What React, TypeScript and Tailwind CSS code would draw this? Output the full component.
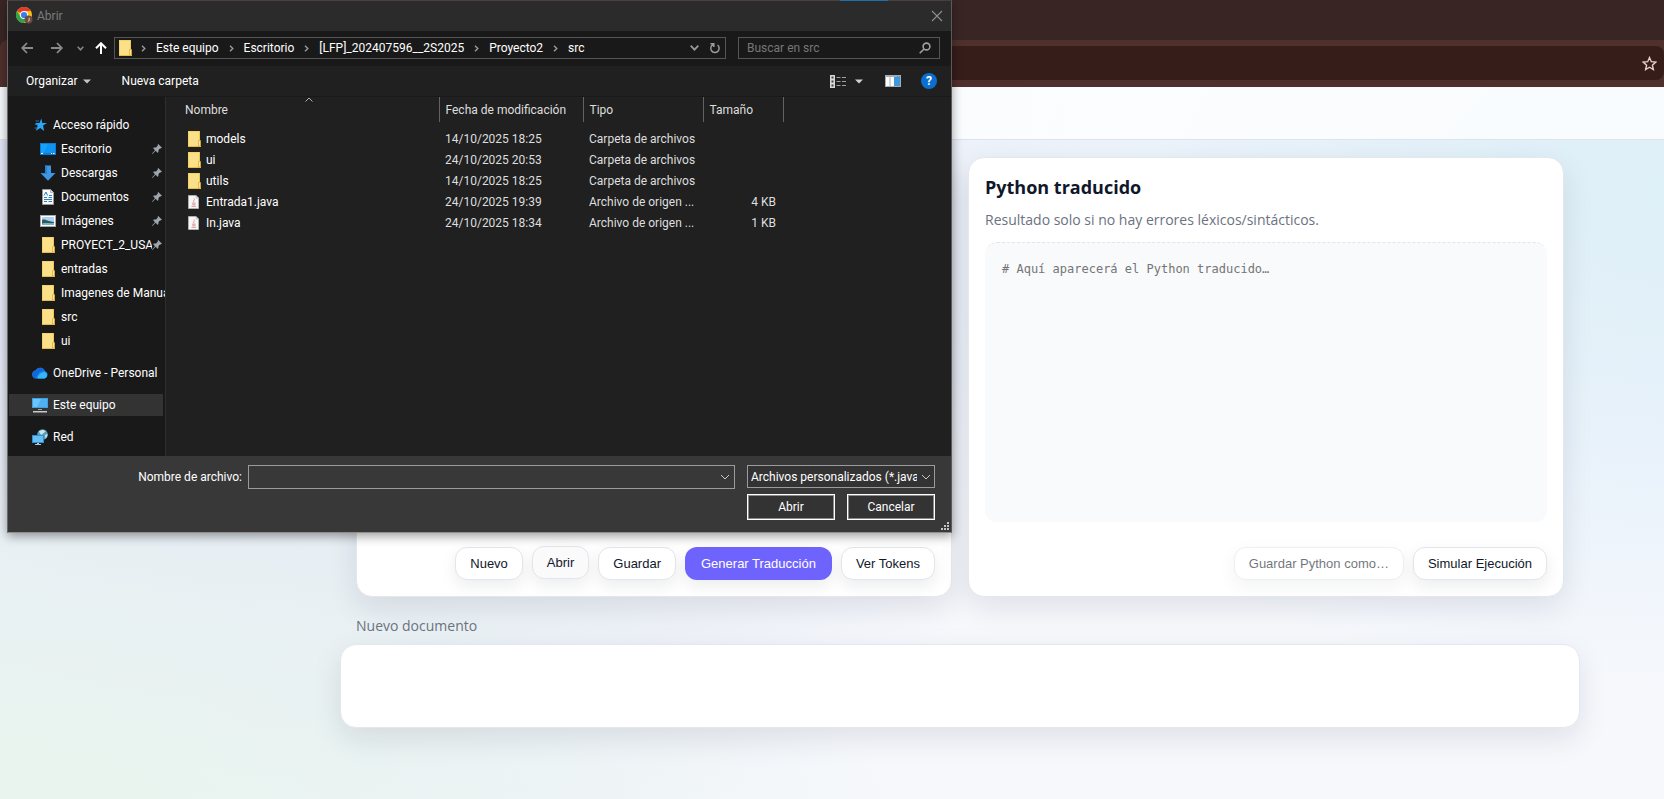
import type { ReactNode } from "react";

type FileRow = { name: string; date: string; type: string; size: string; kind: "folder" | "java" };

const files: FileRow[] = [
  { name: "models", date: "14/10/2025 18:25", type: "Carpeta de archivos", size: "", kind: "folder" },
  { name: "ui", date: "24/10/2025 20:53", type: "Carpeta de archivos", size: "", kind: "folder" },
  { name: "utils", date: "14/10/2025 18:25", type: "Carpeta de archivos", size: "", kind: "folder" },
  { name: "Entrada1.java", date: "24/10/2025 19:39", type: "Archivo de origen ...", size: "4 KB", kind: "java" },
  { name: "In.java", date: "24/10/2025 18:34", type: "Archivo de origen ...", size: "1 KB", kind: "java" },
];

const crumbs = ["Este equipo", "Escritorio", "[LFP]_202407596__2S2025", "Proyecto2", "src"];

function FolderIcon() {
  return (
    <svg width="16" height="16" viewBox="0 0 16 16" className="shrink-0" aria-hidden="true">
      <path d="M2 0h12v16H2z" fill="#fbe08a" />
      <path d="M2 0h1v16H2zM2 0h12v1H2z" fill="#f6d365" />
      <path d="M13 0h1v9h-1z" fill="#eec854" />
      <path d="M2 15h13v1H2z" fill="#e9bd45" />
      <path d="M12.500 9.500h2V15h-2z" fill="#fde9a4" stroke="#e0af33" strokeWidth="0.800" />
    </svg>
  );
}

function JavaFileIcon() {
  return (
    <svg width="16" height="16" viewBox="0 0 16 16" className="shrink-0" aria-hidden="true">
      <path d="M2.500 1.500h7.500l2.500 2.500v10.500h-10z" fill="#f7f7f7" stroke="#b9b9b9" strokeWidth="0.800" />
      <path d="M10 1.500v2.500h2.500" fill="#dcdcdc" stroke="#b9b9b9" strokeWidth="0.600" />
      <path d="M8 4.500c1.500 1.200-1.600 2 0 3.800M6 9.200h3.600M6.400 10.700h3M5.500 12.300h4.600" fill="none" stroke="#d98a8f" strokeWidth="0.900" />
    </svg>
  );
}

function QuickIcon() {
  return (
    <svg width="16" height="16" viewBox="0 0 16 16" className="shrink-0" aria-hidden="true">
      <path d="M9.300 1.500l1 4.400 4.700.2-4 2.500 1.200 5.400-3.900-3-4.500 2.800 1.900-4.700L3.200 6.100l4.300-.2z" fill="#2aa7f5" />
      <path d="M3.500 4h3.500M3 7.500h3M2.500 11h3" stroke="#1d7fc4" strokeWidth="0.900" />
    </svg>
  );
}

function DesktopIcon() {
  return (
    <svg width="16" height="16" viewBox="0 0 16 16" className="shrink-0" aria-hidden="true">
      <rect x="0" y="2" width="16" height="12" fill="#0a7bd6" />
      <path d="M1 3h14v9H1z" fill="#17a1fb" />
      <path d="M8 3h7v9H4z" fill="#0f94f4" />
      <path d="M1 12.500h2M11 12.500h1M13 12.500h1.500" stroke="#fff" strokeWidth="1" />
    </svg>
  );
}

function DownloadIcon() {
  return (
    <svg width="16" height="16" viewBox="0 0 16 16" className="shrink-0" aria-hidden="true">
      <path d="M5 0.500h6V8h4.500L8 15.800.5 8H5z" fill="#3c96e4" />
      <path d="M5 0.500h2V9H2.500L.5 8H5z" fill="#2a7fcb" />
    </svg>
  );
}

function DocumentIcon() {
  return (
    <svg width="16" height="16" viewBox="0 0 16 16" className="shrink-0" aria-hidden="true">
      <path d="M2.500 0.500h8l3 3v12h-11z" fill="#fafafa" stroke="#9c9c9c" strokeWidth="0.900" />
      <path d="M10.500 0.500v3h3" fill="#ddd" stroke="#9c9c9c" strokeWidth="0.700" />
      <path d="M4 6.500L6 3l1.500 3.500M9 6.500h3M4 8.500h3M8.500 8.500h3.500M4 10.500h8M4 12.500h3M8.500 12.500h3.500" fill="none" stroke="#2d7fc2" strokeWidth="1" />
    </svg>
  );
}

function PictureIcon() {
  return (
    <svg width="16" height="16" viewBox="0 0 16 16" className="shrink-0" aria-hidden="true">
      <rect x="0.500" y="2.500" width="15" height="11" fill="#fff" stroke="#a8a8a8" />
      <rect x="2" y="4" width="12" height="8" fill="#a9d3f0" />
      <path d="M2 7c3-1.500 5 1.500 12 2v3H2z" fill="#2d5a5d" />
      <path d="M2 10.500c4-1 8 0 12-.5v2H2z" fill="#7fb0c8" />
    </svg>
  );
}

function CloudIcon() {
  return (
    <svg width="16" height="16" viewBox="0 0 16 16" className="shrink-0" aria-hidden="true">
      <path d="M4 13.500a4 4 0 0 1-.6-7.900A5.300 5.300 0 0 1 13 6.200a3.800 3.800 0 0 1-.6 7.300z" fill="#1b8cf2" />
      <path d="M3.400 5.600A5.300 5.300 0 0 1 13 6.200C9 5.500 6 8.500 4 13.500a4 4 0 0 1-.6-7.900z" fill="#1467d8" />
      <path d="M5.500 13.500C6.500 9.500 9.500 6.800 13 7.200a3.300 3.300 0 0 1-.6 6.300z" fill="#35b8fb" />
    </svg>
  );
}

function ComputerIcon() {
  return (
    <svg width="16" height="16" viewBox="0 0 16 16" className="shrink-0" aria-hidden="true">
      <rect x="0" y="1" width="16" height="10" fill="#3f9fdf" />
      <rect x="1" y="2" width="14" height="8" fill="#6cc4fb" />
      <path d="M9 2h6v8H5z" fill="#4fb0f4" />
      <path d="M6 12h4v1H6z" fill="#9aa6ae" />
      <path d="M1 14h14v1.500H1z" fill="#c4cdd3" />
    </svg>
  );
}

function NetworkIcon() {
  return (
    <svg width="16" height="16" viewBox="0 0 16 16" className="shrink-0" aria-hidden="true">
      <circle cx="10.500" cy="5.500" r="5.300" fill="#5d9db8" />
      <path d="M7 2.500c2-2 5-2 6.500-.5-.5 2-2.500 1.500-3 3s-2 1-3.500-2.500zM13 6l2.500-1c0 2-.8 3.500-2 4.500z" fill="#c6e6ee" />
      <rect x="0" y="6" width="12" height="8" fill="#2f8fd3" />
      <rect x="1" y="7" width="10" height="6" fill="#66c0f8" />
      <path d="M5 14h2v1H5zM3 15h6v1H3z" fill="#b8c3ca" />
    </svg>
  );
}

function PinIcon() {
  return (
    <svg width="10" height="10" viewBox="0 0 10 10" className="shrink-0" aria-hidden="true">
      <path d="M6.200 0L10 3.800 8.800 4.400 8.200 4.200 6.500 6 6.400 8.200 5.600 8.800 3.600 6.700.4 9.900 0 9.500 3 6.200 1.200 4.300 1.800 3.600 4 3.500 5.800 1.700 5.500 1z" fill="#a0a6ad" />
    </svg>
  );
}

function ChromeIcon() {
  return (
    <svg width="17" height="17" viewBox="0 0 17 17" className="shrink-0" aria-hidden="true">
      <circle cx="8" cy="8" r="8" fill="#fbc116" />
      <path d="M8 8L1.070 4A8 8 0 0 1 14.930 4H8z" fill="#e33b2e" />
      <path d="M8 8L4.500 10L1.070 4A8 8 0 0 0 8 16L11.500 10z" fill="#2fa24c" />
      <circle cx="8" cy="8" r="4" fill="#fff" />
      <circle cx="8" cy="8" r="3.100" fill="#3b7ded" />
      <circle cx="12.500" cy="12.500" r="4" fill="#6d4c41" />
      <path d="M13.200 10.700v2.500q0 1-1.300.9" fill="none" stroke="#e8dcd6" strokeWidth="0.900" />
    </svg>
  );
}

function Chevron({ className }: { className: string }) {
  return (
    <svg width="10" height="6" viewBox="0 0 10 6" fill="none" stroke="currentColor" className={className} aria-hidden="true">
      <path d="M1 1l4 4 4-4" />
    </svg>
  );
}

function SideItem({ icon, label, level, pinned, active }: { icon: ReactNode; label: string; level: 1 | 2; pinned?: boolean; active?: boolean }) {
  return (
    <li className={`h-6 py-px ${level === 1 ? "pl-px" : "pl-[9px]"}`}>
      <a
        href="#"
        className={`flex h-[22px] items-center pl-[23px] text-white ${level === 1 ? "mr-[2px]" : ""} ${active ? "bg-[#333333]" : ""}`}
      >
        {icon}
        <span className="ml-[5px] min-w-0 flex-1 overflow-hidden whitespace-nowrap">{label}</span>
        {pinned && <span className="pr-[3px]"><PinIcon /></span>}
      </a>
    </li>
  );
}

function OpenDialog() {
  return (
    <section
      role="dialog"
      aria-label="Abrir archivo"
      className="absolute top-0 left-[7px] flex w-[945px] flex-col border border-t-[#4a3f3d] border-r-[#5a5a5a] border-b-[#8e8e8e] border-l-[#6a6a6a] bg-[#202020] font-[Roboto,'Open_Sans',sans-serif] text-[12px] leading-4 text-white shadow-[0_3px_10px_rgba(0,0,0,0.4)]"
    >
      <span className="absolute -top-px left-[832px] h-px w-12 bg-[#1f6fa8]" />
      <header className="flex h-[30px] items-center justify-between bg-[#2b2b2b] pr-2 pb-px pl-2">
        <div className="flex items-center gap-1 text-[#7c7c7c]">
          <ChromeIcon />
          <span>Abrir</span>
        </div>
        <button aria-label="Cerrar" className="text-[#8f8f8f]">
          <svg width="12" height="12" viewBox="0 0 12 12" stroke="currentColor" strokeWidth="1.100"><path d="M1 1l10 10M11 1L1 11" /></svg>
        </button>
      </header>

      <nav className="flex h-[35px] items-center bg-[#191919] pr-[11px] pb-px pl-[13px]">
        <button aria-label="Atrás" className="text-[#8a8a8a]">
          <svg width="12" height="12" viewBox="0 0 12 12" fill="none" stroke="currentColor" strokeWidth="1.800"><path d="M12 6H1.500M6 1L1.200 6 6 11" /></svg>
        </button>
        <button aria-label="Adelante" className="ml-[18px] text-[#8a8a8a]">
          <svg width="12" height="12" viewBox="0 0 12 12" fill="none" stroke="currentColor" strokeWidth="1.800"><path d="M0 6h10.500M6 1l4.800 5L6 11" /></svg>
        </button>
        <button aria-label="Ubicaciones recientes" className="ml-[14px] text-[#8a8a8a]">
          <svg width="7" height="5" viewBox="0 0 7 5" fill="none" stroke="currentColor" strokeWidth="1.500"><path d="M.7.800l2.800 3 2.800-3" /></svg>
        </button>
        <button aria-label="Subir" className="ml-[11px] text-white">
          <svg width="12" height="12" viewBox="0 0 12 12" fill="none" stroke="currentColor" strokeWidth="2"><path d="M6 12V1.500M1 6.200l5-5 5 5" /></svg>
        </button>
        <div className="ml-[7px] flex h-[22px] min-w-0 flex-1 items-center border border-[#555555] pr-1 pl-[2px]">
          <FolderIcon />
          <ol className="-ml-[2px] flex items-center whitespace-nowrap">
            {crumbs.map((c) => (
              <li key={c} className="flex items-center">
                <span className="flex w-[25px] justify-center text-[#9a9a9a]">
                  <svg width="5" height="7" viewBox="0 0 5 7" fill="none" stroke="currentColor" strokeWidth="1.400"><path d="M1 .7l2.800 2.800L1 6.300" /></svg>
                </span>
                <a href="#">{c}</a>
              </li>
            ))}
          </ol>
          <button aria-label="Historial" className="ml-auto text-[#9a9a9a]">
            <svg width="9" height="6" viewBox="0 0 9 6" fill="none" stroke="currentColor" strokeWidth="1.700"><path d="M.7.700l3.800 4 3.800-4" /></svg>
          </button>
          <button aria-label="Actualizar" className="ml-[10px] text-[#9a9a9a]">
            <svg width="12" height="12" viewBox="0 0 12 12" fill="none" stroke="currentColor" strokeWidth="1.500"><path d="M4 2.600A4.200 4.200 0 1 0 8.500 3M1.500 1.700h3.300v3.300" /></svg>
          </button>
        </div>
        <div className="ml-3 flex h-[22px] w-[202px] items-center border border-[#555555] pr-2 pl-2">
          <input aria-label="Buscar en src" placeholder="Buscar en src" className="min-w-0 flex-1 bg-transparent outline-none placeholder:text-[#777777]" />
          <svg width="12" height="12" viewBox="0 0 12 12" fill="none" stroke="#a0a0a0" strokeWidth="1.600" aria-hidden="true"><circle cx="7.500" cy="4.500" r="3.400" /><path d="M5 7L.7 11.300" /></svg>
        </div>
      </nav>

      <div className="flex h-[31px] items-center border-b border-[#191919] pr-[14px] pl-[18px]">
        <button className="flex items-center gap-[5px]">
          Organizar
          <svg width="8" height="5" viewBox="0 0 8 5" fill="#c4c4c4"><path d="M0 .5h8l-4 4z" /></svg>
        </button>
        <button className="ml-[31px]">Nueva carpeta</button>
        <button aria-label="Cambiar vista" className="ml-auto">
          <svg width="16" height="13" viewBox="0 0 16 13">
            <rect x="0" y="0" width="5" height="13" fill="#d8d8d8" />
            <path d="M1.500 1.500h2v2h-2zM1.500 5.500h2v2h-2zM1.500 9.500h2v2h-2z" fill="#444" />
            <path d="M6.500 2.500h4M12 2.500h4M6.500 6.500h4M12 6.500h4M6.500 10.500h4M12 10.500h4" stroke="#a0a0a0" />
          </svg>
        </button>
        <button aria-label="Más opciones" className="ml-[9px]">
          <svg width="8" height="5" viewBox="0 0 8 5" fill="#d0d0d0"><path d="M0 .5h8l-4 4z" /></svg>
        </button>
        <button aria-label="Panel de vista previa" className="ml-[22px]">
          <svg width="16" height="12" viewBox="0 0 16 12">
            <rect width="16" height="12" fill="#a7adb3" />
            <path d="M1 2h3.500v9H1zM5.500 2H9v9H5.500z" fill="#fff" />
            <path d="M9 2h6v9H9z" fill="#3f97dc" />
            <path d="M12 1h1v1h-1zM14 1h1v1h-1z" fill="#4d8fc4" />
          </svg>
        </button>
        <button aria-label="Ayuda" className="ml-5 flex size-4 items-center justify-center rounded-full bg-[#0a6fd0] text-[12px] font-bold">?</button>
      </div>

      <div className="flex h-[359px]">
        <ul className="w-[157px] shrink-0 bg-[#191919] pt-4">
          <SideItem level={1} icon={<QuickIcon />} label="Acceso rápido" />
          <SideItem level={2} icon={<DesktopIcon />} label="Escritorio" pinned />
          <SideItem level={2} icon={<DownloadIcon />} label="Descargas" pinned />
          <SideItem level={2} icon={<DocumentIcon />} label="Documentos" pinned />
          <SideItem level={2} icon={<PictureIcon />} label="Imágenes" pinned />
          <SideItem level={2} icon={<FolderIcon />} label="PROYECT_2_USA" pinned />
          <SideItem level={2} icon={<FolderIcon />} label="entradas" />
          <SideItem level={2} icon={<FolderIcon />} label="Imagenes de Manua" />
          <SideItem level={2} icon={<FolderIcon />} label="src" />
          <SideItem level={2} icon={<FolderIcon />} label="ui" />
          <li className="h-2" />
          <SideItem level={1} icon={<CloudIcon />} label="OneDrive - Personal" />
          <li className="h-2" />
          <SideItem level={1} icon={<ComputerIcon />} label="Este equipo" active />
          <li className="h-2" />
          <SideItem level={1} icon={<NetworkIcon />} label="Red" />
        </ul>
        <div className="min-w-0 flex-1 border-l border-[#2e2e2e]">
          <table className="w-[617px] table-fixed border-collapse text-left whitespace-nowrap text-[#dedede]">
            <colgroup>
              <col className="w-[273px]" />
              <col className="w-36" />
              <col className="w-[120px]" />
              <col className="w-20" />
            </colgroup>
            <thead>
              <tr className="h-[25px]">
                <th className="relative border-r border-[#636363] p-0 pl-[19px] font-normal">
                  Nombre
                  <svg width="8" height="5" viewBox="0 0 8 5" fill="none" stroke="#b0b0b0" className="absolute top-0 left-[139px]" aria-hidden="true"><path d="M.5 4.500l3.500-3.500 3.500 3.500" /></svg>
                </th>
                <th className="border-r border-[#636363] p-0 pl-[6px] font-normal">Fecha de modificación</th>
                <th className="border-r border-[#636363] p-0 pl-[6px] font-normal">Tipo</th>
                <th className="border-r border-[#636363] p-0 pl-[6px] font-normal">Tamaño</th>
              </tr>
            </thead>
            <tbody>
              <tr className="h-[6px]"><td colSpan={4} className="p-0" /></tr>
              {files.map((f) => (
                <tr key={f.name} className="h-[21px]">
                  <td className="p-0 pl-5 text-white">
                    <span className="flex items-center gap-1">
                      {f.kind === "folder" ? <FolderIcon /> : <JavaFileIcon />}
                      {f.name}
                    </span>
                  </td>
                  <td className="p-0 pl-[6px]">{f.date}</td>
                  <td className="p-0 pl-[6px]">{f.type}</td>
                  <td className="p-0 pr-[7px] text-right">{f.size}</td>
                </tr>
              ))}
            </tbody>
          </table>
        </div>
      </div>

      <footer className="relative flex h-[76px] flex-col gap-[5px] bg-[#383838] pt-[9px] pr-4">
        <div className="flex h-6 items-start">
          <label htmlFor="filename" className="w-[234px] pt-1 text-right">Nombre de archivo:</label>
          <div className="ml-[6px] flex h-6 flex-1 items-center border border-[#9b9b9b] pr-1">
            <input id="filename" className="h-full min-w-0 flex-1 bg-transparent px-1 outline-none" />
            <button aria-label="Archivos recientes" className="text-[#c8c8c8]"><Chevron className="block" /></button>
          </div>
          <div className="relative ml-3 w-[188px]">
            <select aria-label="Tipo de archivo" className="block h-[23px] w-full appearance-none overflow-hidden rounded-none border border-[#9b9b9b] bg-[#333333] py-0 pr-[17px] pl-[3px] text-white outline-none">
              <option>Archivos personalizados (*.java;*.txt)</option>
            </select>
            <Chevron className="pointer-events-none absolute top-[9px] right-1 text-[#c8c8c8]" />
          </div>
        </div>
        <div className="flex justify-end gap-3">
          <button className="h-[26px] w-22 border border-white bg-[#333333] inset-ring inset-ring-[#8a8a8a]">Abrir</button>
          <button className="h-[26px] w-22 border border-white bg-[#333333] inset-ring inset-ring-[#8a8a8a]">Cancelar</button>
        </div>
        <svg width="8" height="8" viewBox="0 0 8 8" fill="#c4c4c4" className="absolute right-[2px] bottom-[2px]" aria-hidden="true">
          <path d="M6 0h2v2H6zM3 3h2v2H3zM6 3h2v2H6zM0 6h2v2H0zM3 6h2v2H3zM6 6h2v2H6z" />
        </svg>
      </footer>
    </section>
  );
}

const actionClass =
  "h-[33px] rounded-xl border border-[#e2e5ec] px-[14px] whitespace-nowrap text-[#0f172a] shadow-[0_6px_16px_rgba(15,23,42,0.08)]";

const cardClass =
  "flex h-[440px] flex-col rounded-2xl border border-[#e4e7ee] bg-white p-4 shadow-[0_10px_30px_rgba(15,23,42,0.10)]";

export default function App() {
  return (
    <div className="relative flex min-h-screen flex-col overflow-hidden bg-[#f6f8fc] font-['Open_Sans','Noto_Sans',sans-serif]">
      <div className="bg-[#392624]">
        <div className="h-10" />
        <div className="h-[47px] rounded-tl-lg bg-[#50302d] pt-[6px] pl-28">
          <div className="flex h-[34px] items-center justify-end rounded-lg bg-[#371d1a] pr-[7px]">
            <button aria-label="Agregar a marcadores">
              <svg width="15" height="15" viewBox="0 0 24 24" fill="none" stroke="#e6cfca" strokeWidth="2.200"><path d="M12 2.500l2.900 6.600 7.100.7-5.400 4.800 1.600 7L12 17.900l-6.200 3.700 1.600-7L2 9.800l7.100-.7z" /></svg>
            </button>
          </div>
        </div>
      </div>

      <div className="flex flex-1 flex-col bg-[radial-gradient(900px_500px_at_0px_760px,#e8f4ec_0%,rgba(232,243,240,0.75)_45%,transparent_100%),radial-gradient(900px_500px_at_1720px_100px,#dceff7_0%,rgba(224,238,250,0.6)_55%,transparent_100%),radial-gradient(900px_800px_at_240px_60px,#dfe1f3_0%,rgba(228,232,246,0.85)_50%,transparent_100%)]">
        <div className="h-[53px] border-b border-[#e0e2ea] bg-white/80" />

        <main className="w-full max-w-[1580px] pt-[17px] pl-[340px]">
          <div className="grid grid-cols-2 gap-4 px-4">
            <section className={cardClass}>
              <div className="mt-auto flex justify-end gap-[9px] font-['Liberation_Sans',sans-serif] text-[13px]">
                <button className={`${actionClass} bg-white`}>Nuevo</button>
                <button className={`${actionClass} -translate-y-px bg-[#fafafa]`}>Abrir</button>
                <button className={`${actionClass} bg-white`}>Guardar</button>
                <button className="h-[33px] rounded-xl bg-[#6f63fe] px-4 whitespace-nowrap text-white shadow-[0_6px_16px_rgba(15,23,42,0.08)]">Generar Traducción</button>
                <button className={`${actionClass} bg-white`}>Ver Tokens</button>
              </div>
            </section>

            <section className={cardClass}>
              <h2 className="text-[18px] leading-[27px] font-bold text-[#0f172a]">Python traducido</h2>
              <p className="mt-[7px] text-[14px] leading-6 text-[#6b7280]">Resultado solo si no hay errores léxicos/sintácticos.</p>
              <textarea
                aria-label="Python traducido"
                readOnly
                placeholder="# Aquí aparecerá el Python traducido…"
                className="mt-[10px] h-[280px] w-full resize-none rounded-xl border border-dashed border-[#f8fafc] border-t-[#e2e5ec] bg-[#f8fafc] px-4 pt-[18px] font-['DejaVu_Sans_Mono',monospace] text-[12px] leading-4 outline-none placeholder:text-[#757575]"
              />
              <div className="mt-auto flex justify-end gap-[9px] font-['Liberation_Sans',sans-serif] text-[13px]">
                <button disabled className={`${actionClass} bg-white opacity-60`}>Guardar Python como…</button>
                <button className={`${actionClass} bg-white`}>Simular Ejecución</button>
              </div>
            </section>
          </div>

          <p className="mt-[17px] px-4 text-[14px] leading-6 text-[#6b7280]">Nuevo documento</p>
          <section aria-label="Salida" className="mt-[6px] h-[84px] rounded-2xl border border-[#e4e7ee] bg-white shadow-[0_10px_30px_rgba(15,23,42,0.10)]" />
        </main>
      </div>

      <OpenDialog />
    </div>
  );
}
